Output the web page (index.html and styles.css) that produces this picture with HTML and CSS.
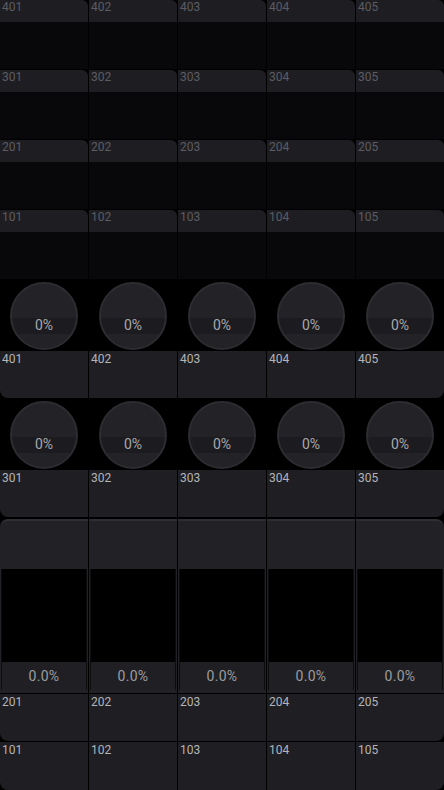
FILE: index.html
```html
<!DOCTYPE html>
<html>
<head>
<meta charset="utf-8">
<link rel="stylesheet" href="styles.css">
</head>
<body>
<div class="app">
  <section class="dim-row">
    <div class="dim-cell"><div class="dim-head">401</div><div class="dim-body"></div></div>
    <div class="dim-cell"><div class="dim-head">402</div><div class="dim-body"></div></div>
    <div class="dim-cell"><div class="dim-head">403</div><div class="dim-body"></div></div>
    <div class="dim-cell"><div class="dim-head">404</div><div class="dim-body"></div></div>
    <div class="dim-cell"><div class="dim-head">405</div><div class="dim-body"></div></div>
  </section>
  <section class="dim-row">
    <div class="dim-cell"><div class="dim-head">301</div><div class="dim-body"></div></div>
    <div class="dim-cell"><div class="dim-head">302</div><div class="dim-body"></div></div>
    <div class="dim-cell"><div class="dim-head">303</div><div class="dim-body"></div></div>
    <div class="dim-cell"><div class="dim-head">304</div><div class="dim-body"></div></div>
    <div class="dim-cell"><div class="dim-head">305</div><div class="dim-body"></div></div>
  </section>
  <section class="dim-row">
    <div class="dim-cell"><div class="dim-head">201</div><div class="dim-body"></div></div>
    <div class="dim-cell"><div class="dim-head">202</div><div class="dim-body"></div></div>
    <div class="dim-cell"><div class="dim-head">203</div><div class="dim-body"></div></div>
    <div class="dim-cell"><div class="dim-head">204</div><div class="dim-body"></div></div>
    <div class="dim-cell"><div class="dim-head">205</div><div class="dim-body"></div></div>
  </section>
  <section class="dim-row">
    <div class="dim-cell"><div class="dim-head">101</div><div class="dim-body"></div></div>
    <div class="dim-cell"><div class="dim-head">102</div><div class="dim-body"></div></div>
    <div class="dim-cell"><div class="dim-head">103</div><div class="dim-body"></div></div>
    <div class="dim-cell"><div class="dim-head">104</div><div class="dim-body"></div></div>
    <div class="dim-cell"><div class="dim-head">105</div><div class="dim-body"></div></div>
  </section>

  <section class="knob-row">
    <div class="knob-cell"><div class="knob">0%</div></div>
    <div class="knob-cell"><div class="knob">0%</div></div>
    <div class="knob-cell"><div class="knob">0%</div></div>
    <div class="knob-cell"><div class="knob">0%</div></div>
    <div class="knob-cell"><div class="knob">0%</div></div>
  </section>
  <section class="btn-row gap-after">
    <div class="btn">401</div>
    <div class="btn">402</div>
    <div class="btn">403</div>
    <div class="btn">404</div>
    <div class="btn">405</div>
  </section>
  <section class="knob-row">
    <div class="knob-cell"><div class="knob">0%</div></div>
    <div class="knob-cell"><div class="knob">0%</div></div>
    <div class="knob-cell"><div class="knob">0%</div></div>
    <div class="knob-cell"><div class="knob">0%</div></div>
    <div class="knob-cell"><div class="knob">0%</div></div>
  </section>
  <section class="btn-row gap-after2">
    <div class="btn">301</div>
    <div class="btn">302</div>
    <div class="btn">303</div>
    <div class="btn">304</div>
    <div class="btn">305</div>
  </section>

  <section class="fader-row">
    <div class="fcol"><div class="fhead"></div><div class="ftrack"><div class="fblack"></div><div class="fval">0.0%</div></div></div>
    <div class="fcol"><div class="fhead"></div><div class="ftrack"><div class="fblack"></div><div class="fval">0.0%</div></div></div>
    <div class="fcol"><div class="fhead"></div><div class="ftrack"><div class="fblack"></div><div class="fval">0.0%</div></div></div>
    <div class="fcol"><div class="fhead"></div><div class="ftrack"><div class="fblack"></div><div class="fval">0.0%</div></div></div>
    <div class="fcol"><div class="fhead"></div><div class="ftrack"><div class="fblack"></div><div class="fval">0.0%</div></div></div>
  </section>

  <section class="btn-row gap-before">
    <div class="btn">201</div>
    <div class="btn">202</div>
    <div class="btn">203</div>
    <div class="btn">204</div>
    <div class="btn">205</div>
  </section>
  <section class="btn-row btn-row-last gap-before">
    <div class="btn">101</div>
    <div class="btn">102</div>
    <div class="btn">103</div>
    <div class="btn">104</div>
    <div class="btn">105</div>
  </section>
</div>
</body>
</html>
```

FILE: styles.css
```css
html, body {
  margin: 0;
  padding: 0;
  background: #000;
}
body {
  width: 444px;
  height: 790px;
  overflow: hidden;
  font-family: Roboto, "Liberation Sans", sans-serif;
}
.app {
  display: flex;
  flex-direction: column;
}

/* dimmer rows */
.dim-row {
  display: grid;
  grid-template-columns: repeat(5, 88px);
  column-gap: 1px;
  height: 69px;
  margin-bottom: 1px;
}
.dim-cell {
  display: flex;
  flex-direction: column;
}
.dim-head {
  height: 22px;
  box-sizing: border-box;
  background: #1e1e22;
  border-top-right-radius: 6px;
  color: #5c5c62;
  font-size: 12px;
  line-height: 12px;
  padding: 1px 0 0 2px;
}
.dim-body {
  flex: 1;
  background: #08080a;
}

/* knobs */
.knob-row {
  display: grid;
  grid-template-columns: repeat(5, 88px);
  column-gap: 1px;
  height: 71px;
}
.knob-cell {
  display: flex;
  justify-content: center;
  padding-top: 2px;
}
.knob {
  width: 68px;
  height: 68px;
  box-sizing: border-box;
  border-radius: 50%;
  border: 2px solid #2c2c31;
  background: linear-gradient(to bottom, #232327 0, #232327 34px, #1c1c20 34px, #1c1c20 50px, #232327 50px);
  display: flex;
  align-items: center;
  justify-content: center;
  padding-top: 18px;
  color: #a8a8ac;
  font-size: 14px;
}

/* buttons */
.btn-row {
  display: grid;
  grid-template-columns: repeat(5, 88px);
  column-gap: 1px;
  height: 47px;
}
.btn-row-last {
  height: 48px;
}
.gap-after { margin-bottom: 1px; }
.gap-after2 { margin-bottom: 2px; }
.gap-before { margin-top: 1px; }
.btn {
  background: #1f1f23;
  color: #b4b4b8;
  font-size: 12px;
  line-height: 12px;
  padding: 2px 0 0 2px;
}
.btn:first-child { border-bottom-left-radius: 8px; }
.btn:last-child { border-bottom-right-radius: 8px; }

/* faders */
.fader-row {
  display: grid;
  grid-template-columns: repeat(5, 88px);
  column-gap: 1px;
  height: 174px;
}
.fcol {
  display: flex;
  flex-direction: column;
  background: #222226;
  border-top: 2px solid #2e2e33;
  padding-bottom: 3px;
}
.fcol:first-child { border-top-left-radius: 8px; }
.fcol:last-child { border-top-right-radius: 8px; }
.fhead {
  height: 48px;
}
.ftrack {
  flex: 1;
  display: flex;
  flex-direction: column;
  margin: 0 1px;
  border-left: 1px solid #0c0c0e;
  border-right: 1px solid #0c0c0e;
}
.fblack {
  flex: 1;
  background: #000;
}
.fval {
  height: 28px;
  background: #202024;
  color: #9c9ca0;
  font-size: 14px;
  display: flex;
  align-items: center;
  justify-content: center;
  letter-spacing: 0.3px;
}
```
